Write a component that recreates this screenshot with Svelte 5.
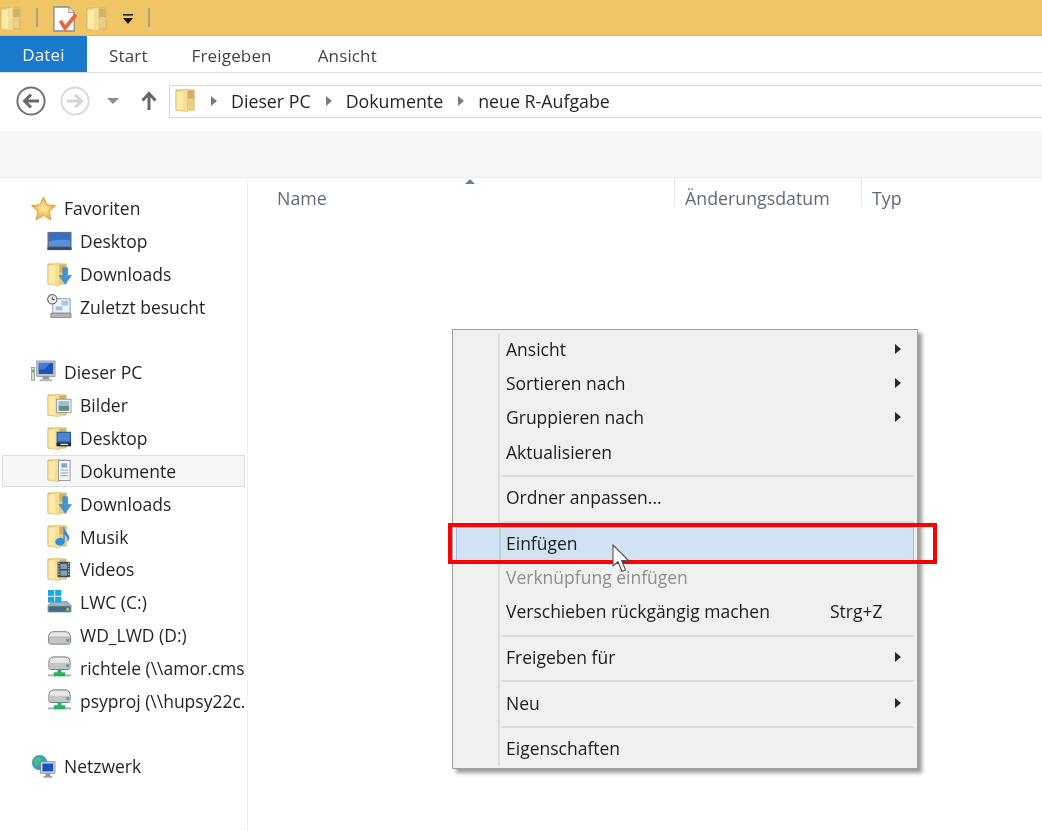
<script>
  const favs = [
    { label: "Desktop", icon: "monitor" },
    { label: "Downloads", icon: "folder-down" },
    { label: "Zuletzt besucht", icon: "recent" }
  ];
  const pc = [
    { label: "Bilder", icon: "folder-pic" },
    { label: "Desktop", icon: "folder-desk" },
    { label: "Dokumente", icon: "folder-doc", selected: true },
    { label: "Downloads", icon: "folder-down" },
    { label: "Musik", icon: "folder-music" },
    { label: "Videos", icon: "folder-video" },
    { label: "LWC (C:)", icon: "drive-win" },
    { label: "WD_LWD (D:)", icon: "drive" },
    { label: "richtele (\\\\amor.cms.hu-berlin.de)", icon: "netdrive" },
    { label: "psyproj (\\\\hupsy22c.psychologie)", icon: "netdrive" }
  ];
  const menu = [
    [
      { label: "Ansicht", sub: true },
      { label: "Sortieren nach", sub: true },
      { label: "Gruppieren nach", sub: true },
      { label: "Aktualisieren" }
    ],
    [{ label: "Ordner anpassen..." }],
    [
      { label: "Einfügen", hot: true },
      { label: "Verknüpfung einfügen", off: true },
      { label: "Verschieben rückgängig machen", key: "Strg+Z" }
    ],
    [{ label: "Freigeben für", sub: true }],
    [{ label: "Neu", sub: true }],
    [{ label: "Eigenschaften" }]
  ];
</script>

{#snippet folderBase()}
  <path d="M1 2 H20 V23 H1 Z" fill="#e9cf84" stroke="#cfae62" stroke-width=".8" />
  <path d="M12 3 H19.5 V11 H12 Z" fill="#d2b06a" />
  <path d="M1 3.5 L13 1 V25 L1 23 Z" fill="#f5dd92" stroke="#dcc070" stroke-width=".6" />
  <path d="M2 4.5 L8 3.4 V23 L2 22.2 Z" fill="#fbeaaa" />
{/snippet}

{#snippet icon(name)}
  <svg class="ico" viewBox="0 0 26 26" aria-hidden="true">
    {#if name === "monitor"}
      <rect x="0.5" y="3" width="25" height="19" fill="#5b718e" />
      <rect x="2" y="4.5" width="22" height="13.5" fill="#3a6ec4" />
      <path d="M2 13 Q14 10 24 12 V18 H2 Z" fill="#5b8fdc" />
      <rect x="0.5" y="19" width="25" height="2.6" fill="#36475c" />
    {:else if name === "recent"}
      <rect x="6" y="5" width="18" height="15" fill="#eef2f3" stroke="#8f9a9e" />
      <rect x="15" y="7" width="7" height="5" fill="#a9c9e4" />
      <rect x="9" y="13" width="7" height="4" fill="#9dbfdc" />
      <circle cx="5.5" cy="5.5" r="4.8" fill="#f2f2f2" stroke="#6f6f6f" stroke-width="1.2" />
      <path d="M5.5 3 V5.8 H8" fill="none" stroke="#444" stroke-width="1" />
      <path d="M4 20 H25 V24.5 H4 Z" fill="#aeb5b9" stroke="#757c80" stroke-width=".8" />
    {:else if name === "drive-win"}
      <path d="M2 15 L6 12 H21 L25 16 V23 H1 V16 Z" fill="#a7b2b8" stroke="#6e7b83" stroke-width=".6" />
      <rect x="1.5" y="17" width="23" height="5.5" rx="1" fill="#3f6b85" />
      <rect x="20" y="18.5" width="3" height="3" fill="#8fc78a" />
      <rect x="1" y="0" width="6.5" height="6" fill="#18a6ec" />
      <rect x="8.5" y="0" width="6.5" height="6" fill="#18a6ec" />
      <rect x="1" y="7" width="6.5" height="6" fill="#18a6ec" />
      <rect x="8.5" y="7" width="6.5" height="6" fill="#18a6ec" />
    {:else if name === "drive"}
      <path d="M1.5 15 Q2 9 7 9 H19 Q24 9 24.5 15 V20 Q24.5 22 22 22 H4 Q1.5 22 1.5 20 Z" fill="#e8e8e8" stroke="#7f7f7f" />
      <rect x="2" y="14.5" width="22" height="7" rx="1.5" fill="#c3c5c6" stroke="#8a8a8a" stroke-width=".5" />
      <rect x="20" y="16.5" width="3" height="3" fill="#5ea667" />
    {:else if name === "netdrive"}
      <path d="M2 8 Q2 2 7 2 H19 Q24 2 24 8 V13 Q24 15 22 15 H4 Q2 15 2 13 Z" fill="#e8e8e8" stroke="#6f6f6f" />
      <rect x="2.5" y="8" width="21" height="6.5" rx="1.5" fill="#c3c5c6" />
      <rect x="20" y="9.5" width="3" height="3" fill="#5ea667" />
      <rect x="11" y="15" width="4" height="5" fill="#27b25c" />
      <rect x="1" y="20" width="24" height="2.4" fill="#b4bcc0" />
      <rect x="7" y="18" width="12" height="4" fill="#27b25c" />
    {:else}
      {@render folderBase()}
      {#if name === "folder-down"}
        <path d="M16.5 6 H21.5 V14 H25.5 L19 23 L12.5 14 H16.5 Z" fill="#3c96dc" stroke="#2d78b8" stroke-width=".5" />
      {:else if name === "folder-pic"}
        <rect x="10" y="6.5" width="15" height="14" fill="#eef3f3" stroke="#8b989c" stroke-width=".9" />
        <rect x="12" y="8.5" width="11" height="5" fill="#8fc3d8" />
        <rect x="12" y="13.5" width="11" height="5" fill="#6b8b7f" />
      {:else if name === "folder-desk"}
        <rect x="10" y="6" width="15" height="15" fill="#26518f" />
        <rect x="11" y="7" width="13" height="9" fill="#4a86d0" />
        <rect x="10" y="17.5" width="15" height="3.5" fill="#1f2a38" />
        <rect x="14" y="18.5" width="8" height="1.2" fill="#f0f0f0" />
      {:else if name === "folder-doc"}
        <rect x="12" y="2.5" width="12" height="21" fill="#f2f5f6" stroke="#8a9499" stroke-width=".9" />
        <rect x="15" y="5.5" width="6" height="4.5" fill="#7fa9d1" />
        <path d="M14 12.5 H22 M14 15.5 H22 M14 18.5 H22" stroke="#9aa3a8" />
      {:else if name === "folder-music"}
        <path d="M17 2 Q19 8 22 11 Q25 15 21 19 Q22 14 18.5 11 V19 A5 4 0 1 1 17 15.5 Z" fill="#2e8fd8" />
      {:else if name === "folder-video"}
        <rect x="11" y="5" width="13" height="16" fill="#3e4b52" />
        <rect x="14" y="7" width="7" height="5.5" fill="#7fa0b4" />
        <rect x="14" y="14" width="7" height="5.5" fill="#7fa0b4" />
        <path d="M12.4 6 V20 M22.6 6 V20" stroke="#cfd5d8" stroke-width="1.2" stroke-dasharray="1.4 1.4" />
      {/if}
    {/if}
  </svg>
{/snippet}

{#snippet crumbArrow()}
  <span class="crumb-arrow"></span>
{/snippet}

<div class="window">
  <header class="titlebar">
    <svg class="qa folder" viewBox="0 0 26 26" aria-hidden="true">{@render folderBase()}</svg>
    <span class="qa-sep first"></span>
    <svg class="qa doc" viewBox="0 0 26 28" aria-hidden="true">
      <path d="M1 1 H17 L23 7 V27 H1 Z" fill="#fff" stroke="#8a8a8a" stroke-width="1.4" />
      <path d="M17 1 V7 H23" fill="#e8e8e8" stroke="#9a9a9a" />
      <path d="M8 16 L13 24 L25 9" fill="none" stroke="#e2693f" stroke-width="4" />
    </svg>
    <svg class="qa folder second" viewBox="0 0 26 26" aria-hidden="true">{@render folderBase()}</svg>
    <svg class="qa drop" viewBox="0 0 12 11" aria-hidden="true">
      <rect x="1" y="0" width="10" height="1.6" fill="#222" />
      <path d="M1 4 H11 L6 10 Z" fill="#111" />
    </svg>
    <span class="qa-sep last"></span>
  </header>

  <nav class="tabs">
    <span class="tab active">Datei</span>
    <span class="tab start">Start</span>
    <span class="tab share">Freigeben</span>
    <span class="tab view">Ansicht</span>
  </nav>

  <div class="addressrow">
    <svg class="navbtn" viewBox="0 0 30 30" aria-hidden="true">
      <circle cx="15" cy="15" r="13.6" fill="#fff" stroke="#6f7376" stroke-width="2" />
      <path d="M23 15 H9 M15 8.5 L8.5 15 L15 21.5" fill="none" stroke="#666a6d" stroke-width="3" />
    </svg>
    <svg class="navbtn fwd" viewBox="0 0 30 30" aria-hidden="true">
      <circle cx="15" cy="15" r="13.6" fill="#fff" stroke="#d9dadb" stroke-width="2" />
      <path d="M7 15 H21 M15 8.5 L21.5 15 L15 21.5" fill="none" stroke="#d5d6d7" stroke-width="3" />
    </svg>
    <span class="recent-drop"></span>
    <svg class="uparrow" viewBox="0 0 16 20" aria-hidden="true">
      <path d="M8 19 V3 M1.5 9.5 L8 2.5 L14.5 9.5" fill="none" stroke="#666a6d" stroke-width="3" />
    </svg>
    <div class="addressbox">
      <svg class="addr-folder" viewBox="0 0 26 26" aria-hidden="true">{@render folderBase()}</svg>
      {@render crumbArrow()}
      <span class="crumb">Dieser PC</span>
      {@render crumbArrow()}
      <span class="crumb">Dokumente</span>
      {@render crumbArrow()}
      <span class="crumb">neue R-Aufgabe</span>
    </div>
  </div>

  <div class="commandbar"></div>

  <div class="main">
    <aside class="sidebar">
      <div class="row top">
        <svg class="ico star" viewBox="0 0 26 26" aria-hidden="true">
          <defs>
            <radialGradient id="stargrad">
              <stop offset="0" stop-color="#fff0a0" />
              <stop offset="1" stop-color="#f5a540" />
            </radialGradient>
          </defs>
          <path d="M13 1 L16.6 9.2 L25.4 10 L18.8 16 L20.8 24.8 L13 20.2 L5.2 24.8 L7.2 16 L0.6 10 L9.4 9.2 Z" fill="url(#stargrad)" stroke="#e79a3a" />
        </svg>
        <span>Favoriten</span>
      </div>
      {#each favs as f}
        <div class="row child">{@render icon(f.icon)}<span>{f.label}</span></div>
      {/each}

      <div class="row top spaced">
        <svg class="ico" viewBox="0 0 26 26" aria-hidden="true">
          <rect x="6" y="1" width="19" height="16" fill="#bcc6cf" stroke="#7d8790" stroke-width=".7" />
          <rect x="8" y="3" width="15" height="11.5" fill="#1c52b6" />
          <path d="M8 3 H20 L14 10 H8 Z" fill="#3d7ade" />
          <rect x="12" y="17" width="7" height="3" fill="#8d969e" />
          <rect x="9" y="20" width="13" height="2" fill="#aab2b9" />
          <rect x="0.5" y="8" width="3.5" height="13" fill="#d8dcdf" stroke="#777" stroke-width=".6" />
          <rect x="1.4" y="10" width="1.7" height="3" fill="#3fae5c" />
        </svg>
        <span>Dieser PC</span>
      </div>
      {#each pc as p}
        <div class="row child" class:selected={p.selected}>{@render icon(p.icon)}<span class="clip">{p.label}</span></div>
      {/each}

      <div class="row top spaced">
        <svg class="ico" viewBox="0 0 26 26" aria-hidden="true">
          <circle cx="9" cy="9" r="8" fill="#2fa3d6" />
          <path d="M3 6 Q7 2 10 4 Q12 7 8 9 Q8 13 4 12 Z" fill="#5dbb63" />
          <rect x="10" y="8" width="15" height="12" fill="#c4ccd3" stroke="#7c868f" stroke-width=".7" />
          <rect x="12" y="10" width="11" height="8" fill="#1c52b6" />
          <rect x="15" y="20" width="5" height="3" fill="#8d969e" />
          <rect x="13" y="23" width="9" height="1.6" fill="#8d969e" />
        </svg>
        <span>Netzwerk</span>
      </div>
    </aside>

    <section class="files">
      <div class="cols">
        <div class="col name">Name<span class="sort"></span></div>
        <div class="col date">Änderungsdatum</div>
        <div class="col type">Typ</div>
      </div>
    </section>
  </div>

  <div class="contextmenu">
    {#each menu as group, i}
      {#if i > 0}<div class="sep"></div>{/if}
      {#each group as item}
        <div class="item" class:hot={item.hot} class:off={item.off}>
          <span class="label">{item.label}</span>
          {#if item.key}<span class="key">{item.key}</span>{/if}
          {#if item.sub}<span class="subarrow"></span>{/if}
        </div>
      {/each}
    {/each}
  </div>

  <div class="redbox"></div>

  <svg class="cursor" viewBox="0 0 19 30" aria-hidden="true">
    <path d="M1 1 V22 L6 17.5 L10 27.5 L13.5 26 L9.5 16.5 H16.5 Z" fill="#fff" stroke="#555" stroke-width="1.1" stroke-linejoin="round" />
  </svg>
</div>

<style>
  :global(body) {
    margin: 0;
    background: #fff;
  }
  .window {
    position: relative;
    width: 1042px;
    height: 831px;
    overflow: hidden;
    background: #fff;
    color: #1f2326;
    font-family: "Open Sans", "Noto Sans", sans-serif;
    font-size: 17.5px;
  }
  /* the reference is an upscaled capture, everything but the red box is soft */
  .titlebar,
  .tabs,
  .addressrow,
  .commandbar,
  .main,
  .contextmenu,
  .cursor {
    filter: blur(0.45px);
  }

  .titlebar {
    display: flex;
    align-items: center;
    box-sizing: border-box;
    height: 36px;
    padding-top: 3px;
    background: #f0c566;
    border-bottom: 1px solid #dcb866;
  }
  .qa {
    display: block;
    flex: none;
  }
  .qa.folder {
    width: 26px;
    height: 26px;
  }
  .qa.folder.second {
    margin-left: 9px;
  }
  .qa-sep {
    width: 2px;
    height: 19px;
    margin-top: -3px;
    background: #b8a377;
  }
  .qa-sep.first {
    margin-left: 10px;
  }
  .qa-sep.last {
    margin-left: 14px;
  }
  .qa.doc {
    width: 24px;
    height: 26px;
    margin-left: 15px;
  }
  .qa.drop {
    width: 12px;
    height: 11px;
    margin-left: 10px;
  }

  .tabs {
    display: flex;
    align-items: center;
    height: 36px;
    border-bottom: 1px solid #dadbdc;
  }
  .tab {
    box-sizing: border-box;
    padding-top: 3px;
    color: #444;
    font-size: 17px;
    letter-spacing: 0.15px;
  }
  .tab.active {
    width: 87px;
    height: 100%;
    display: flex;
    align-items: center;
    justify-content: center;
    background: #1979ca;
    color: #f2f7fc;
    padding-top: 0;
  }
  .tab.start {
    margin-left: 22px;
  }
  .tab.share {
    margin-left: 44px;
  }
  .tab.view {
    margin-left: 46px;
  }

  .addressrow {
    display: flex;
    align-items: center;
    box-sizing: border-box;
    height: 58px;
    padding: 0 0 2px 16px;
  }
  .navbtn {
    width: 30px;
    height: 30px;
    flex: none;
  }
  .navbtn.fwd {
    margin-left: 14px;
  }
  .recent-drop {
    width: 0;
    height: 0;
    margin-left: 17px;
    border-left: 6px solid transparent;
    border-right: 6px solid transparent;
    border-top: 6px solid #8b8d8f;
  }
  .uparrow {
    width: 16px;
    height: 20px;
    margin-left: 22px;
    flex: none;
  }
  .addressbox {
    display: flex;
    align-items: center;
    flex: 1;
    box-sizing: border-box;
    height: 33px;
    margin: 1px 0 0 12px;
    padding: 0 0 2px 5px;
    border: 1px solid #d9d9d9;
    border-right: none;
    font-size: 17.8px;
  }
  .addr-folder {
    width: 25px;
    height: 25px;
    flex: none;
    margin-right: -4px;
  }
  .crumb-arrow {
    width: 0;
    height: 0;
    margin: 0 14px 0 15px;
    border-top: 5px solid transparent;
    border-bottom: 5px solid transparent;
    border-left: 6px solid #7b7b7b;
  }
  .crumb {
    white-space: nowrap;
  }

  .commandbar {
    height: 46px;
    background: #f5f6f7;
    border-bottom: 1px solid #e8ecef;
  }

  .main {
    display: flex;
    height: 653px;
  }
  .sidebar {
    width: 248px;
    flex: none;
    box-sizing: border-box;
    padding-top: 14px;
    border-right: 1px solid #f1f1f1;
  }
  .row {
    display: flex;
    align-items: center;
    box-sizing: border-box;
    height: 32.85px;
    margin-right: 2px;
    white-space: nowrap;
    overflow: hidden;
  }
  .row.top {
    padding-left: 31px;
  }
  .row.top.spaced {
    margin-top: 32.6px;
  }
  .row.child {
    padding-left: 47px;
  }
  .row.selected {
    margin-left: 2px;
    padding-left: 45px;
    background: #f6f6f6;
    border: 1px solid #dedede;
  }
  .row.selected .ico {
    margin-left: -1px;
  }
  .ico {
    width: 25px;
    height: 25px;
    flex: none;
    margin-right: 8px;
  }
  .clip {
    overflow: hidden;
  }

  .files {
    flex: 1;
  }
  .cols {
    display: flex;
    height: 28px;
    color: #5f6b7a;
    font-size: 17.8px;
  }
  .col {
    box-sizing: border-box;
    position: relative;
    padding-top: 7px;
    line-height: 26px;
    white-space: nowrap;
  }
  .col.name {
    width: 427px;
    padding-left: 29px;
    border-right: 1px solid #e3e8ee;
  }
  .col.date {
    width: 187px;
    padding-left: 10px;
    border-right: 1px solid #e3e8ee;
  }
  .col.type {
    padding-left: 10px;
  }
  .sort {
    position: absolute;
    top: 1px;
    left: 217px;
    width: 0;
    height: 0;
    border-left: 5px solid transparent;
    border-right: 5px solid transparent;
    border-bottom: 5px solid #5b87a8;
  }

  .contextmenu {
    position: absolute;
    left: 452px;
    top: 329px;
    width: 466px;
    height: 440px;
    box-sizing: border-box;
    padding: 3px 3px;
    background: #f0f0f0;
    border: 1px solid #a0a0a0;
    box-shadow: 4px 4px 4px #9a9a9a;
    background-image: linear-gradient(#dcdcdc, #dcdcdc);
    background-size: 2px 432px;
    background-position: 45px 3px;
    background-repeat: no-repeat;
  }
  .item {
    position: relative;
    display: flex;
    align-items: center;
    box-sizing: border-box;
    height: 34.3px;
    padding: 0 0 3px 50px;
    color: #1c1c1c;
    white-space: nowrap;
  }
  .item.hot {
    background: #d1e2f2;
    border: 1px solid #9dbfe0;
    padding-left: 49px;
  }
  .item.hot::before {
    content: "";
    position: absolute;
    left: 42px;
    top: 0;
    bottom: 0;
    width: 2px;
    background: #bdd0e2;
  }
  .item.off {
    color: #8f8f8f;
  }
  .key {
    position: absolute;
    left: 374px;
  }
  .subarrow {
    position: absolute;
    left: 439px;
    width: 0;
    height: 0;
    border-top: 5px solid transparent;
    border-bottom: 5px solid transparent;
    border-left: 6px solid #2a2a2a;
  }
  .sep {
    height: 2px;
    margin: 4.7px 0 4.7px 45px;
    background: #dcdcdc;
  }

  .redbox {
    position: absolute;
    left: 448px;
    top: 523px;
    width: 481px;
    height: 33px;
    border: 4px solid #ff0000;
  }
  .cursor {
    position: absolute;
    left: 612px;
    top: 544px;
    width: 19px;
    height: 30px;
  }
</style>
